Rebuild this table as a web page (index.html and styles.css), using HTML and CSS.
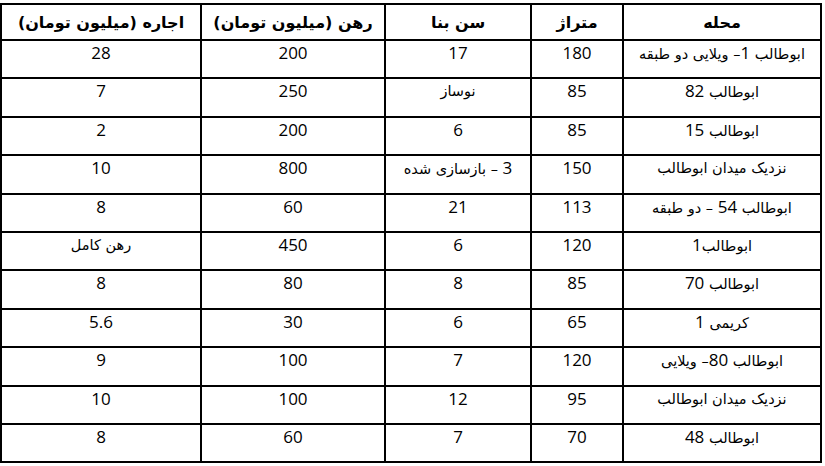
FILE: index.html
```html
<!DOCTYPE html>
<html lang="fa" dir="rtl">
<head>
<meta charset="utf-8">
<link rel="stylesheet" href="styles.css">
</head>
<body>
<table class="grid">
  <colgroup>
    <col class="c-area">
    <col class="c-size">
    <col class="c-age">
    <col class="c-dep">
    <col class="c-rent">
  </colgroup>
  <thead>
    <tr>
      <th>محله</th>
      <th>متراژ</th>
      <th>سن بنا</th>
      <th>رهن (میلیون تومان)</th>
      <th>اجاره (میلیون تومان)</th>
    </tr>
  </thead>
  <tbody>
    <tr><td>ابوطالب <span class="n">1</span>– ویلایی دو طبقه</td><td><span class="n">180</span></td><td><span class="n">17</span></td><td><span class="n">200</span></td><td><span class="n">28</span></td></tr>
    <tr><td>ابوطالب <span class="n">82</span></td><td><span class="n">85</span></td><td>نوساز</td><td><span class="n">250</span></td><td><span class="n">7</span></td></tr>
    <tr><td>ابوطالب <span class="n">15</span></td><td><span class="n">85</span></td><td><span class="n">6</span></td><td><span class="n">200</span></td><td><span class="n">2</span></td></tr>
    <tr><td>نزدیک میدان ابوطالب</td><td><span class="n">150</span></td><td><span class="n">3</span> – بازسازی شده</td><td><span class="n">800</span></td><td><span class="n">10</span></td></tr>
    <tr><td>ابوطالب <span class="n">54</span> – دو طبقه</td><td><span class="n">113</span></td><td><span class="n">21</span></td><td><span class="n">60</span></td><td><span class="n">8</span></td></tr>
    <tr><td>ابوطالب<span class="n">1</span></td><td><span class="n">120</span></td><td><span class="n">6</span></td><td><span class="n">450</span></td><td>رهن کامل</td></tr>
    <tr><td>ابوطالب <span class="n">70</span></td><td><span class="n">85</span></td><td><span class="n">8</span></td><td><span class="n">80</span></td><td><span class="n">8</span></td></tr>
    <tr><td>کریمی <span class="n">1</span></td><td><span class="n">65</span></td><td><span class="n">6</span></td><td><span class="n">30</span></td><td><span class="n">5.6</span></td></tr>
    <tr><td>ابوطالب <span class="n">80</span>– ویلایی</td><td><span class="n">120</span></td><td><span class="n">7</span></td><td><span class="n">100</span></td><td><span class="n">9</span></td></tr>
    <tr><td>نزدیک میدان ابوطالب</td><td><span class="n">95</span></td><td><span class="n">12</span></td><td><span class="n">100</span></td><td><span class="n">10</span></td></tr>
    <tr><td>ابوطالب <span class="n">48</span></td><td><span class="n">70</span></td><td><span class="n">7</span></td><td><span class="n">60</span></td><td><span class="n">8</span></td></tr>
  </tbody>
</table>
</body>
</html>
```

FILE: styles.css
```css
html, body {
  margin: 0;
  padding: 0;
  background: #fff;
}

body {
  padding: 3px 3px 0 3px;
  font-family: "DejaVu Sans", sans-serif;
  color: #000;
}

.grid {
  border-collapse: collapse;
  width: 820px;
  table-layout: fixed;
}

.c-area { width: 198px; }
.c-size { width: 92px; }
.c-age { width: 146px; }
.c-dep { width: 184px; }
.c-rent { width: 200px; }

.grid th,
.grid td {
  box-sizing: border-box;
  border: 2px solid #000;
  text-align: center;
  padding: 0 2px;
}

.grid th {
  height: 36px;
  font-weight: bold;
  font-size: 16px;
  vertical-align: middle;
}

.grid td {
  height: 38.4px;
  vertical-align: top;
  padding-top: 3px;
  font-size: 14.5px;
  line-height: 18px;
}

.n {
  font-family: "Open Sans", sans-serif;
  font-size: 17px;
  line-height: 18px;
}
```
